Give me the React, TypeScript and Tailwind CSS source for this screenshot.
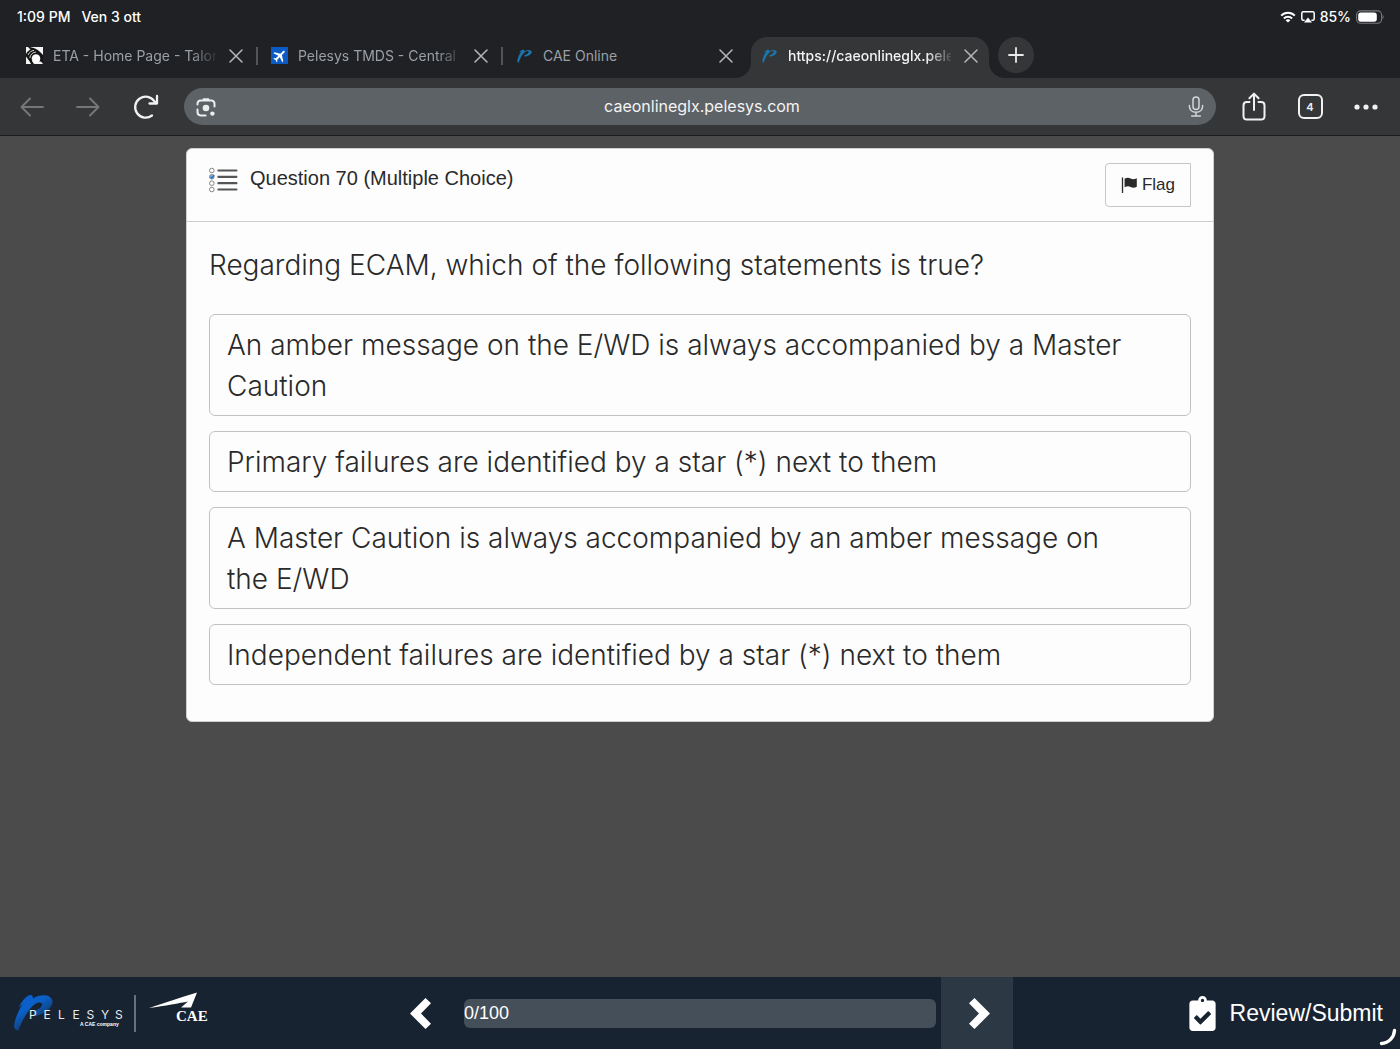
import React from "react";
import { FaClipboardCheck } from "react-icons/fa";
import { MdFlight } from "react-icons/md";

function PBrush({ className }: { className?: string }) {
  return (
    <svg viewBox="0 0 40 37" className={className} aria-hidden="true">
      <path
        fill="currentColor"
        d="M16 1 C10 6 3 19 1 31 C1 35 3 37 5 36 C8 26 13 15 21 8 C25 5 31 4 31 7 C31 11 25 15 20 16 L20 20 C28 20 39 15 39 8 C39 2 28 1 20 6 C20 4 19 2 16 1 Z M16 1 C11 3 7 7 4 11 C8 8 12 6 15 6 Z"
      />
    </svg>
  );
}

function EtaIcon() {
  return (
    <svg viewBox="0 0 17 17" className="size-[17px] shrink-0" aria-hidden="true">
      <rect width="17" height="17" fill="#f4f4f4" />
      <path d="M2 0 C7 0 12 2 17 8 L17 17 C17 17 16 15 14.5 14.5 L6 14 L8 17 L5 17 C3 13 1 12 0 11 L0 7 C1 5 3 3.4 4.5 2.6 Z" fill="#151515" />
      <path d="M0 9.5 C2 12 4 15 4.6 17 L0 17 Z" fill="#f4f4f4" />
      <path d="M2 8 C3.4 5 5.4 3.8 8 3.4 M3.8 11 C4.4 7.5 6.5 5.4 10 5" fill="none" stroke="#e8e8e8" strokeWidth="0.9" />
      <circle cx="10" cy="11.6" r="4.3" fill="#fff" />
    </svg>
  );
}

function PlaneIcon() {
  return (
    <span className="flex size-[17px] shrink-0 items-center justify-center bg-[#0a5bc4] text-white">
      <MdFlight className="size-4 rotate-45" />
    </span>
  );
}

function CloseIcon() {
  return (
    <svg viewBox="0 0 14 14" className="size-3.5" fill="none" stroke="currentColor" strokeWidth="1.5" strokeLinecap="round" aria-hidden="true">
      <path d="M1 1 L13 13 M13 1 L1 13" />
    </svg>
  );
}

function Tab({ icon, title, active, divider, fade }: { icon: React.ReactNode; title: string; active?: boolean; divider?: boolean; fade?: boolean }) {
  return (
    <div
      className={
        "relative flex h-[41px] w-[245px] min-w-0 items-center pb-1 pl-[13px] " +
        (active ? "text-[#f1f3f4]" : "text-[#9aa0a6]")
      }
    >
      {active && (
        <svg viewBox="0 0 271 41" className="pointer-events-none absolute -left-[13px] top-0 h-[41px] w-[271px]" aria-hidden="true">
          <path fill="#353638" d="M0 41 C9 41 16 34 16 25 L16 16 C16 7 23 0 32 0 L238 0 C247 0 254 7 254 16 L254 25 C254 34 261 41 270 41 Z" />
        </svg>
      )}
      <a href="#tab" className="relative flex min-w-0 flex-1 items-center gap-[10px]">
        {icon}
        <span
          className={
            "flex-1 overflow-hidden whitespace-nowrap text-sm leading-5 " +
            (active ? "font-medium " : "") +
            (fade ? "[mask-image:linear-gradient(to_right,black_85%,transparent_102%)]" : "")
          }
        >
          {title}
        </span>
      </a>
      <button type="button" aria-label={"Close " + title} className="relative ml-[13px] mr-[13px] text-[#b5b8bb]">
        <CloseIcon />
      </button>
      <span className={divider ? "h-[18px] w-0.5 bg-[#50555a]" : "w-0.5"} />
    </div>
  );
}

function StatusBar() {
  return (
    <div className="flex h-[37px] items-start justify-between pl-[17px] pr-4 pt-[7px] text-sm font-medium leading-5 text-white">
      <div className="flex gap-[11px]">
        <span>1:09 PM</span>
        <span>Ven 3 ott</span>
      </div>
      <div className="flex items-center">
        <svg viewBox="0 0 16 12" className="h-3 w-4" aria-hidden="true">
          <g fill="none" stroke="#fff" strokeWidth="2">
            <path d="M1.2 4.6 C5 0.8 11 0.8 14.8 4.6" />
            <path d="M3.9 7.5 C6.2 5.3 9.8 5.3 12.1 7.5" />
          </g>
          <path d="M5.6 9.2 C7 8 9 8 10.4 9.2 L8 11.6 Z" fill="#fff" />
        </svg>
        <svg viewBox="0 0 14 12" className="ml-[5px] h-3 w-3.5" aria-hidden="true">
          <path d="M3.6 9.3 H2.4 C1.4 9.3 0.8 8.7 0.8 7.8 V2.3 C0.8 1.4 1.4 0.8 2.4 0.8 H11.6 C12.6 0.8 13.2 1.4 13.2 2.3 V7.8 C13.2 8.7 12.6 9.3 11.6 9.3 H10.4" fill="none" stroke="#fff" strokeWidth="1.5" />
          <path d="M7 6.6 L11 11.5 H3 Z" fill="#fff" />
        </svg>
        <span className="ml-[5px]">85%</span>
        <svg viewBox="0 0 28 14" className="ml-[5px] h-3.5 w-7" aria-hidden="true">
          <rect x="0.6" y="0.9" width="25" height="12.4" rx="4" fill="none" stroke="#77797c" strokeWidth="1.1" />
          <rect x="2.2" y="2.5" width="18.6" height="9.2" rx="2.6" fill="#fff" />
          <path d="M26.6 5 C28 5.6 28 8.6 26.6 9.2 Z" fill="#77797c" />
        </svg>
      </div>
    </div>
  );
}

function ToolButton({ label, children }: { label: string; children: React.ReactNode }) {
  return (
    <button type="button" aria-label={label} className="flex h-10 w-14 shrink-0 items-center justify-center">
      {children}
    </button>
  );
}

function Toolbar() {
  return (
    <div className="flex h-[58px] items-center border-b border-[#1b1c1e] bg-[#353638] pl-1 pr-1.5 text-[#f1f1f1]">
      <ToolButton label="Back">
        <svg viewBox="0 0 24 20" className="h-5 w-6" fill="none" stroke="#757678" strokeWidth="2" strokeLinecap="round" strokeLinejoin="round">
          <path d="M10 1.5 L1.5 10 L10 18.5 M1.5 10 H23" />
        </svg>
      </ToolButton>
      <ToolButton label="Forward">
        <svg viewBox="0 0 24 20" className="h-5 w-6" fill="none" stroke="#757678" strokeWidth="2" strokeLinecap="round" strokeLinejoin="round">
          <path d="M14 1.5 L22.5 10 L14 18.5 M22.5 10 H1" />
        </svg>
      </ToolButton>
      <ToolButton label="Reload">
        <svg viewBox="0 0 26 26" className="ml-1 size-[26px]" fill="none" stroke="currentColor" strokeWidth="2.3" strokeLinecap="round" strokeLinejoin="round">
          <path d="M19 21.5 A10.5 10.5 0 1 1 21.5 7.5 L23.5 9.5 M24 2 V9.5 H16.5" />
        </svg>
      </ToolButton>
      <div className="ml-3 flex h-[37px] min-w-0 flex-1 items-center rounded-full bg-[#5d6266] px-3">
        <button type="button" aria-label="Search with camera" className="text-[#eceded]">
          <svg viewBox="0 0 20 20" className="size-5" fill="none" stroke="currentColor" strokeWidth="2" strokeLinecap="round">
            <path d="M1.5 7.6 V7 C1.5 5 2.8 3.4 4.8 3.4 H15.2 C17.2 3.4 18.5 5 18.5 7 V9.6" strokeLinejoin="round" />
            <path d="M6 3.6 L7.2 1.2 H12.8 L14 3.6 Z" fill="currentColor" stroke="none" />
            <path d="M1.5 12.4 V15 C1.5 17 2.8 18.4 4.8 18.4 H9.6" />
            <circle cx="10" cy="11" r="3.3" fill="currentColor" stroke="none" />
            <circle cx="16.4" cy="16.6" r="2.2" fill="currentColor" stroke="none" />
          </svg>
        </button>
        <input
          aria-label="Address"
          defaultValue="caeonlineglx.pelesys.com"
          className="min-w-0 flex-1 bg-transparent pb-0.5 text-center text-base leading-6 text-[#f4f4f4] outline-none"
        />
        <button type="button" aria-label="Voice search" className="flex w-4 justify-center text-[#d3d6d8]">
          <svg viewBox="0 0 16 21" className="h-[21px] w-4 shrink-0" fill="none" stroke="currentColor" strokeWidth="1.5" strokeLinecap="round">
            <rect x="5" y="1" width="6" height="12.5" rx="3" />
            <path d="M1.4 9.5 V10 C1.4 13.8 4 16.3 8 16.3 C12 16.3 14.6 13.8 14.6 10 V9.5 M8 16.5 V19.8 M3.6 19.9 H12.4" />
          </svg>
        </button>
      </div>
      <div className="ml-2.5 flex">
        <ToolButton label="Share">
          <svg viewBox="0 0 24 29" className="h-[29px] w-6" fill="none" stroke="currentColor" strokeWidth="2" strokeLinecap="round" strokeLinejoin="round">
            <path d="M7.5 10 H5 C3 10 1.5 11.4 1.5 13.4 V24 C1.5 26.3 3 27.6 5 27.6 H19 C21 27.6 22.5 26.3 22.5 24 V13.4 C22.5 11.4 21 10 19 10 H16.5" />
            <path d="M12 18 V2 M7.4 6.2 L12 1.6 L16.6 6.2" />
          </svg>
        </ToolButton>
        <ToolButton label="Open tabs">
          <span className="flex size-[25px] items-center justify-center rounded-md border-2 border-current text-[11px] font-semibold leading-4">4</span>
        </ToolButton>
        <ToolButton label="More">
          <svg viewBox="0 0 24 6" className="h-1.5 w-6" fill="currentColor">
            <circle cx="3" cy="3" r="2.6" />
            <circle cx="12" cy="3" r="2.6" />
            <circle cx="21" cy="3" r="2.6" />
          </svg>
        </ToolButton>
      </div>
    </div>
  );
}

function ListIcon() {
  return (
    <svg viewBox="0 0 29 26" className="mt-[18px] h-[26px] w-[29px] shrink-0" fill="none" aria-hidden="true">
      <g stroke="#858585" strokeWidth="1">
        <circle cx="2.8" cy="3.5" r="2.3" />
        <circle cx="2.8" cy="9.8" r="2.3" fill="#8dbdf0" />
        <circle cx="2.8" cy="16.2" r="2.3" />
        <circle cx="2.8" cy="22.5" r="2.3" />
      </g>
      <path d="M1.6 9.6 L2.8 11 L5.2 8" stroke="#1f6fd0" strokeWidth="1.3" />
      <path d="M9.4 3.5 H27.4 M9.4 9.8 H27.4 M9.4 16.2 H27.4 M9.4 22.5 H27.4" stroke="#555" strokeWidth="2.2" strokeLinecap="round" />
    </svg>
  );
}

const options = [
  "An amber message on the E/WD is always accompanied by a Master Caution",
  "Primary failures are identified by a star (*) next to them",
  "A Master Caution is always accompanied by an amber message on the E/WD",
  "Independent failures are identified by a star (*) next to them",
];

function QuestionCard() {
  return (
    <section className="w-full max-w-[1028px] rounded-md border border-[#cfcfcf] bg-[#fdfdfd] font-['Liberation_Sans',sans-serif] text-[#2a2a2a]">
      <header className="flex h-[73px] items-start border-b border-[#cfcfcf] px-[22px]">
        <ListIcon />
        <h1 className="ml-3 mt-[15px] flex-1 text-xl leading-7">Question 70 (Multiple Choice)</h1>
        <button type="button" className="mt-3.5 flex h-11 w-[86px] items-center justify-center gap-1 rounded-l border border-[#c6c6c6] text-[17px] leading-6">
          <svg viewBox="0 0 17 17" className="h-[17px] w-[17px]" aria-hidden="true">
            <path d="M1.5 0.5 V16" stroke="#2a2a2a" strokeWidth="1.3" />
            <path d="M3.6 1.7 C6 0.3 7.6 0.5 9.6 1.5 C11.6 2.5 13.4 2.3 15.8 1.3 V9.7 C13.4 10.9 11.6 10.9 9.6 9.9 C7.6 8.9 6 8.9 3.6 10.3 Z" fill="#2a2a2a" />
          </svg>
          Flag
        </button>
      </header>
      <div className="px-[22px] pb-9 pt-[23px] font-[Inter,sans-serif] text-[28px] font-light leading-[41px]">
        <h2>Regarding ECAM, which of the following statements is true?</h2>
        <div className="mt-7 flex flex-col gap-[15px]">
          {options.map((o) => (
            <button key={o} type="button" className="rounded-md border border-[#c2c2c2] pb-2 pl-[17px] pr-14 pt-2.5 text-left">
              {o}
            </button>
          ))}
        </div>
      </div>
    </section>
  );
}

function BrandLogos() {
  return (
    <div className="h-full w-[385px] shrink-0">
      <svg viewBox="0 0 220 72" className="h-[72px] w-[220px]" role="img" aria-label="Pelesys, a CAE company">
        <defs>
          <linearGradient id="brush" gradientUnits="userSpaceOnUse" x1="36" y1="22" x2="46" y2="38">
            <stop offset="0.2" stopColor="#0a60c8" />
            <stop offset="1" stopColor="#123d73" />
          </linearGradient>
        </defs>
        <path
          fill="url(#brush)"
          d="M30 18 C33 18 33 20 33 21.5 C39 17 51 16.5 52.5 24 C53 31 45 37 35 39.5 L34 34 C39 33 43 29 42 26.5 C40 24 35 26 31.5 30 C26 37 21 46 18.5 53 C16 54 14.5 52 14 49 C15 42 18 34 23 26.5 L19 30.5 C21 25 26 19 30 18 Z"
        />
        <text x="29 43.5 58 72.5 86.5 101 115" y="42" fill="#e9edf2" fontFamily="Inter, sans-serif" fontSize="12" fontWeight="400">PELESYS</text>
        <text x="80" y="49" fill="#fff" fontFamily="Liberation Sans, sans-serif" fontSize="5" fontWeight="700">A CAE company</text>
        <path d="M135 18 V55" stroke="#8b9299" strokeWidth="1.4" />
        <path d="M149 31 L184 19.5 L197 15.5 L191 30.5 L181 30.5 L188 24.5 C180 26 165 29 149 31 Z" fill="#fff" />
        <text x="176" y="44" fill="#fff" fontFamily="Liberation Serif, serif" fontSize="15" fontWeight="700">CAE</text>
      </svg>
    </div>
  );
}

function Footer() {
  return (
    <footer className="relative flex h-[72px] shrink-0 items-center overflow-hidden bg-[#182331] font-['Liberation_Sans',sans-serif] text-white">
      <BrandLogos />
      <button type="button" aria-label="Previous question" className="flex h-full w-[72px] shrink-0 items-center justify-center">
        <svg viewBox="0 0 21 31" className="mr-0.5 h-[31px] w-[21px]" fill="#fff">
          <path d="M0 15.5 L15.5 0 L21 5.2 L11 15.5 L21 25.8 L15.5 31 Z" />
        </svg>
      </button>
      <div
        role="progressbar"
        aria-label="Questions answered"
        aria-valuenow={0}
        aria-valuemin={0}
        aria-valuemax={100}
        className="ml-[7px] mr-[5px] h-[29px] min-w-0 flex-1 rounded-md bg-[#454f5a] text-lg leading-[29px]"
      >
        0/100
      </div>
      <button type="button" aria-label="Next question" className="flex h-full w-[72px] shrink-0 items-center justify-center bg-[#2d3845]">
        <svg viewBox="0 0 21 31" className="ml-1 h-[31px] w-[21px]" fill="#fff">
          <path d="M21 15.5 L5.5 0 L0 5.2 L10 15.5 L0 25.8 L5.5 31 Z" />
        </svg>
      </button>
      <div className="flex w-[387px] shrink-0 justify-end pr-[17px]">
        <button type="button" className="flex items-center gap-3.5 text-[23px] leading-8">
          <FaClipboardCheck className="h-[35px] w-[27px]" />
          Review/Submit
        </button>
      </div>
      <svg viewBox="0 0 18 18" className="absolute bottom-[3px] right-[3px] size-[18px]" fill="none" stroke="#fff" strokeWidth="3.4" strokeLinecap="round" aria-hidden="true">
        <path d="M15.5 2.5 C15 9.5 10 15 2.5 15.5" />
      </svg>
    </footer>
  );
}

export default function App() {
  return (
    <div className="flex min-h-screen flex-col bg-[#4b4b4b] font-[Inter,sans-serif]">
      <div className="bg-[#202124]">
        <StatusBar />
        <nav className="flex pl-[13px]">
          <Tab icon={<EtaIcon />} title="ETA - Home Page - Talon" divider fade />
          <Tab icon={<PlaneIcon />} title="Pelesys TMDS - Central" divider fade />
          <Tab icon={<PBrush className="h-3.5 w-[17px] shrink-0 text-[#1b75ab]" />} title="CAE Online" />
          <Tab icon={<PBrush className="h-3.5 w-[17px] shrink-0 text-[#1b75ab]" />} title="https://caeonlineglx.pelesys.com" active fade />
          <button type="button" aria-label="New tab" className="ml-[5px] flex size-9 items-center justify-center rounded-full bg-[#353638] text-[#e8eaed]">
            <svg viewBox="0 0 16 16" className="size-4" fill="none" stroke="currentColor" strokeWidth="1.8" strokeLinecap="round">
              <path d="M8 1 V15 M1 8 H15" />
            </svg>
          </button>
        </nav>
      </div>
      <Toolbar />
      <main className="flex flex-1 items-start justify-center px-4 pb-8 pt-3">
        <QuestionCard />
      </main>
      <Footer />
    </div>
  );
}
